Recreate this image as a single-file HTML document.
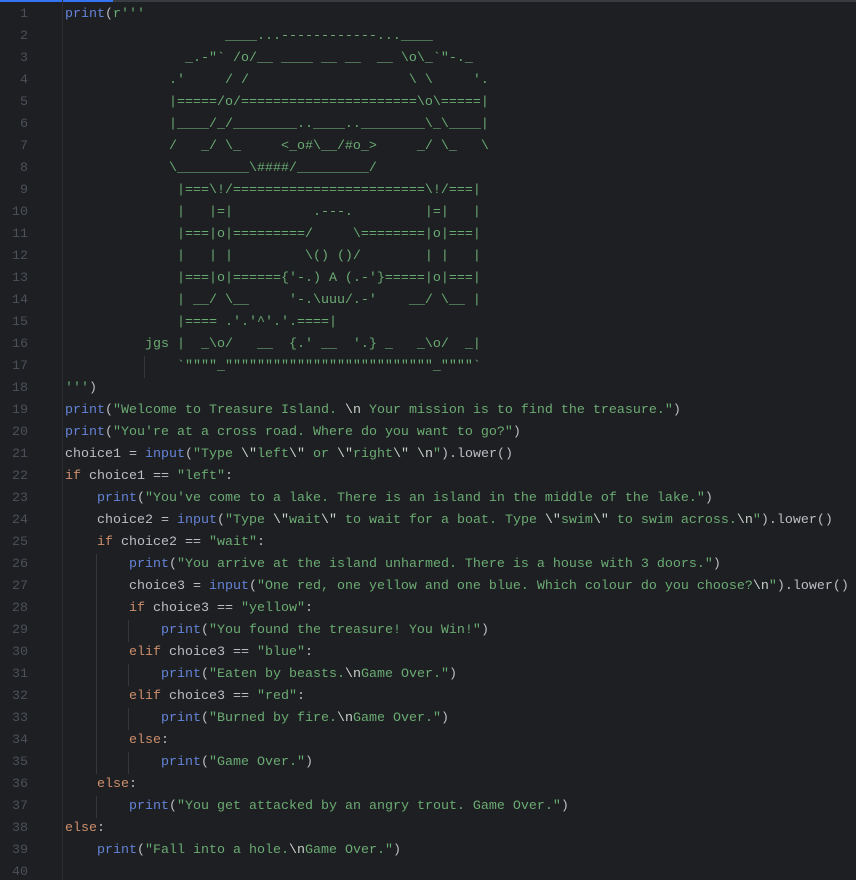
<!DOCTYPE html>
<html><head><meta charset="utf-8"><style>
html,body{margin:0;padding:0;background:#1e1f22;width:856px;height:880px;overflow:hidden}
body{position:relative;font-family:"Liberation Mono",monospace;font-size:13.33px}
.top{position:absolute;left:0;top:0;width:856px;height:2px;background:#393b40}
.topb{position:absolute;left:0;top:0;width:113px;height:2px;background:#3574f0}
.gut{position:absolute;left:62px;top:0;width:1px;height:880px;background:#2b2d30}
.w{position:absolute;left:0;top:4px;width:856px;height:876px}
.ln{position:absolute;left:0;width:28px;text-align:right;color:#4b5059;height:22px;line-height:22px}
.c{position:absolute;left:65px;white-space:pre;color:#bcbec4;height:22px;line-height:22px}
.g{position:absolute;width:1px;background:#34363b}
.k{color:#cf8e6d}.b{color:#6583d8}.s{color:#6aab73}.e{color:#c9d3c9}
</style></head><body>
<div class="top"></div><div class="topb"></div><div class="gut"></div>
<div class="w">
<div class="g" style="left:144px;top:352px;height:22px"></div>
<div class="g" style="left:96px;top:550px;height:220px"></div>
<div class="g" style="left:96px;top:792px;height:22px"></div>
<div class="g" style="left:128px;top:616px;height:22px"></div>
<div class="g" style="left:128px;top:660px;height:22px"></div>
<div class="g" style="left:128px;top:704px;height:22px"></div>
<div class="g" style="left:128px;top:748px;height:22px"></div>

<div class="ln" style="top:0px">1</div><div class="c" style="top:0px"><span class="b">print</span>(<span class="s">r'''</span></div>
<div class="ln" style="top:22px">2</div><div class="c s" style="top:22px">                    ____...------------...____</div>
<div class="ln" style="top:44px">3</div><div class="c s" style="top:44px">               _.-"` /o/__ ____ __ __  __ \o\_`"-._</div>
<div class="ln" style="top:66px">4</div><div class="c s" style="top:66px">             .'     / /                    \ \     '.</div>
<div class="ln" style="top:88px">5</div><div class="c s" style="top:88px">             |=====/o/======================\o\=====|</div>
<div class="ln" style="top:110px">6</div><div class="c s" style="top:110px">             |____/_/________..____..________\_\____|</div>
<div class="ln" style="top:132px">7</div><div class="c s" style="top:132px">             /   _/ \_     &lt;_o#\__/#o_&gt;     _/ \_   \</div>
<div class="ln" style="top:154px">8</div><div class="c s" style="top:154px">             \_________\####/_________/</div>
<div class="ln" style="top:176px">9</div><div class="c s" style="top:176px">              |===\!/========================\!/===|</div>
<div class="ln" style="top:198px">10</div><div class="c s" style="top:198px">              |   |=|          .---.         |=|   |</div>
<div class="ln" style="top:220px">11</div><div class="c s" style="top:220px">              |===|o|=========/     \========|o|===|</div>
<div class="ln" style="top:242px">12</div><div class="c s" style="top:242px">              |   | |         \() ()/        | |   |</div>
<div class="ln" style="top:264px">13</div><div class="c s" style="top:264px">              |===|o|======{'-.) A (.-'}=====|o|===|</div>
<div class="ln" style="top:286px">14</div><div class="c s" style="top:286px">              | __/ \__     '-.\uuu/.-'    __/ \__ |</div>
<div class="ln" style="top:308px">15</div><div class="c s" style="top:308px">              |==== .'.'^'.'.====|</div>
<div class="ln" style="top:330px">16</div><div class="c s" style="top:330px">          jgs |  _\o/   __  {.' __  '.} _   _\o/  _|</div>
<div class="ln" style="top:352px">17</div><div class="c s" style="top:352px">              `""""_""""""""""""""""""""""""""_""""`</div>
<div class="ln" style="top:374px">18</div><div class="c" style="top:374px"><span class="s">'''</span>)</div>
<div class="ln" style="top:396px">19</div><div class="c" style="top:396px"><span class="b">print</span>(<span class="s">"Welcome to Treasure Island. <span class="e">\n</span> Your mission is to find the treasure."</span>)</div>
<div class="ln" style="top:418px">20</div><div class="c" style="top:418px"><span class="b">print</span>(<span class="s">"You're at a cross road. Where do you want to go?"</span>)</div>
<div class="ln" style="top:440px">21</div><div class="c" style="top:440px">choice1 = <span class="b">input</span>(<span class="s">"Type <span class="e">\"</span>left<span class="e">\"</span> or <span class="e">\"</span>right<span class="e">\"</span> <span class="e">\n</span>"</span>).lower()</div>
<div class="ln" style="top:462px">22</div><div class="c" style="top:462px"><span class="k">if</span> choice1 == <span class="s">"left"</span>:</div>
<div class="ln" style="top:484px">23</div><div class="c" style="top:484px">    <span class="b">print</span>(<span class="s">"You've come to a lake. There is an island in the middle of the lake."</span>)</div>
<div class="ln" style="top:506px">24</div><div class="c" style="top:506px">    choice2 = <span class="b">input</span>(<span class="s">"Type <span class="e">\"</span>wait<span class="e">\"</span> to wait for a boat. Type <span class="e">\"</span>swim<span class="e">\"</span> to swim across.<span class="e">\n</span>"</span>).lower()</div>
<div class="ln" style="top:528px">25</div><div class="c" style="top:528px">    <span class="k">if</span> choice2 == <span class="s">"wait"</span>:</div>
<div class="ln" style="top:550px">26</div><div class="c" style="top:550px">        <span class="b">print</span>(<span class="s">"You arrive at the island unharmed. There is a house with 3 doors."</span>)</div>
<div class="ln" style="top:572px">27</div><div class="c" style="top:572px">        choice3 = <span class="b">input</span>(<span class="s">"One red, one yellow and one blue. Which colour do you choose?<span class="e">\n</span>"</span>).lower()</div>
<div class="ln" style="top:594px">28</div><div class="c" style="top:594px">        <span class="k">if</span> choice3 == <span class="s">"yellow"</span>:</div>
<div class="ln" style="top:616px">29</div><div class="c" style="top:616px">            <span class="b">print</span>(<span class="s">"You found the treasure! You Win!"</span>)</div>
<div class="ln" style="top:638px">30</div><div class="c" style="top:638px">        <span class="k">elif</span> choice3 == <span class="s">"blue"</span>:</div>
<div class="ln" style="top:660px">31</div><div class="c" style="top:660px">            <span class="b">print</span>(<span class="s">"Eaten by beasts.<span class="e">\n</span>Game Over."</span>)</div>
<div class="ln" style="top:682px">32</div><div class="c" style="top:682px">        <span class="k">elif</span> choice3 == <span class="s">"red"</span>:</div>
<div class="ln" style="top:704px">33</div><div class="c" style="top:704px">            <span class="b">print</span>(<span class="s">"Burned by fire.<span class="e">\n</span>Game Over."</span>)</div>
<div class="ln" style="top:726px">34</div><div class="c" style="top:726px">        <span class="k">else</span>:</div>
<div class="ln" style="top:748px">35</div><div class="c" style="top:748px">            <span class="b">print</span>(<span class="s">"Game Over."</span>)</div>
<div class="ln" style="top:770px">36</div><div class="c" style="top:770px">    <span class="k">else</span>:</div>
<div class="ln" style="top:792px">37</div><div class="c" style="top:792px">        <span class="b">print</span>(<span class="s">"You get attacked by an angry trout. Game Over."</span>)</div>
<div class="ln" style="top:814px">38</div><div class="c" style="top:814px"><span class="k">else</span>:</div>
<div class="ln" style="top:836px">39</div><div class="c" style="top:836px">    <span class="b">print</span>(<span class="s">"Fall into a hole.<span class="e">\n</span>Game Over."</span>)</div>
<div class="ln" style="top:858px">40</div>
</div>
</body></html>
